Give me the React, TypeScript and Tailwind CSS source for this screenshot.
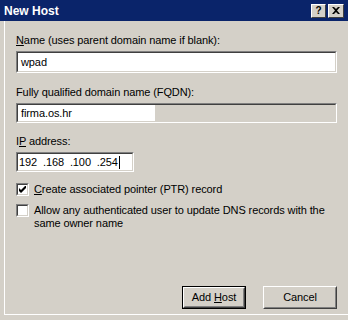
import React from 'react';

const font = { fontFamily: '"Liberation Sans", Arial, sans-serif' };

function Sunken({ className, children }: { className?: string; children?: React.ReactNode }) {
  return (
    <div className={'border border-t-[#808080] border-l-[#808080] border-b-white border-r-white ' + (className ?? '')}>
      <div className="h-full border border-t-[#404040] border-l-[#404040] border-b-[#d4d0c8] border-r-[#d4d0c8]">
        {children}
      </div>
    </div>
  );
}

function Check({ checked }: { checked?: boolean }) {
  return (
    <Sunken className="w-[13px] h-[13px] shrink-0">
      <div className="w-full h-full bg-white flex items-center justify-center">
        {checked && (
          <svg width="7" height="7" viewBox="0 0 7 7">
            <path d="M0 2v3l2 2 5-5V-1L2 4z" fill="#000" />
          </svg>
        )}
      </div>
    </Sunken>
  );
}

function Btn({ children, def, w }: { children: React.ReactNode; def?: boolean; w: string }) {
  return (
    <div className={(def ? 'border border-black ' : '') + w + ' h-[23px]'}>
      <div className="h-full border border-t-white border-l-white border-b-[#404040] border-r-[#404040]">
        <div className="h-full border border-t-[#d4d0c8] border-l-[#d4d0c8] border-b-[#808080] border-r-[#808080] flex items-center justify-center text-[11px] text-black">
          <span>{children}</span>
        </div>
      </div>
    </div>
  );
}

export default function App() {
  return (
    <div className="w-[348px] h-[320px] bg-[#d4d0c8] flex flex-col overflow-hidden" style={font}>
      <div className="h-[21px] bg-[#0a246a] flex items-center pl-[4px] pr-[4px] shrink-0">
        <span className="text-white font-bold text-[12px] flex-1">New Host</span>
        <div className="flex gap-[2px]">
          <div className="w-[15px] h-[14px] bg-[#d4d0c8] border border-t-white border-l-white border-b-[#404040] border-r-[#404040] flex items-center justify-center text-[10px] font-bold text-black leading-none">?</div>
          <div className="w-[16px] h-[14px] bg-[#d4d0c8] border border-t-white border-l-white border-b-[#404040] border-r-[#404040] flex items-center justify-center">
            <svg width="8" height="7" viewBox="0 0 8 7">
              <path d="M0 0h2l2 2 2-2h2L5 3.5 8 7H6L4 5 2 7H0l3-3.5z" fill="#000" />
            </svg>
          </div>
        </div>
      </div>
      <div className="flex-1 border-l border-l-white ml-[4px] mb-[5px] border-b border-b-white flex flex-col pl-[11px] pr-[11px] text-[11px] tracking-[-0.1px] text-black">
        <div className="mt-[13px] leading-[13px]"><u>N</u>ame (uses parent domain name if blank):</div>
        <Sunken className="mt-[4px] h-[22px]">
          <div className="h-full bg-white flex items-center pl-[3px]">wpad</div>
        </Sunken>
        <div className="mt-[13px] leading-[13px]">Fully qualified domain name (FQDN):</div>
        <Sunken className="mt-[4px] h-[20px]">
          <div className="h-full flex">
            <div className="w-[137px] bg-white flex items-center pl-[3px]">firma.os.hr</div>
          </div>
        </Sunken>
        <div className="mt-[12px] leading-[13px]">I<u>P</u> address:</div>
        <Sunken className="mt-[4px] h-[20px] w-[118px]">
          <div className="h-full bg-white flex items-center pl-[1px] whitespace-pre">
            <span>192&nbsp;&nbsp;.168&nbsp;&nbsp;.100&nbsp;&nbsp;.254</span>
            <span className="inline-block w-px h-[13px] bg-black ml-px" />
          </div>
        </Sunken>
        <div className="mt-[11px] flex items-center gap-[5px]">
          <Check checked />
          <span className="leading-[13px]"><u>C</u>reate associated pointer (PTR) record</span>
        </div>
        <div className="mt-[8px] flex items-start gap-[5px]">
          <Check />
          <span className="leading-[13px]">Allow any authenticated user to update DNS records with the same owner name</span>
        </div>
        <div className="mt-auto mb-[5px] flex justify-end gap-[17px]">
          <Btn def w="w-[64px]">Add <u>H</u>ost</Btn>
          <Btn w="w-[74px]">Cancel</Btn>
        </div>
      </div>
    </div>
  );
}
